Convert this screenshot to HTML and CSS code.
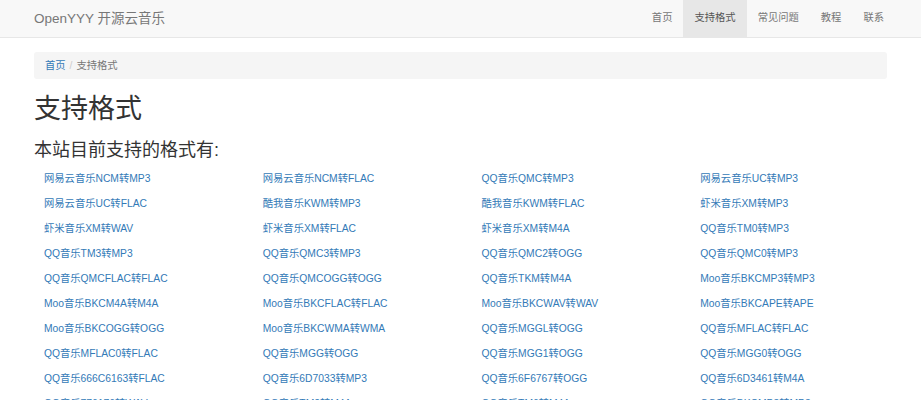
FILE: index.html
```html
<!DOCTYPE html>
<html lang="zh-CN">
<head>
  <meta charset="UTF-8" />
  <meta name="viewport" content="width=device-width, initial-scale=1.0" />
  <title>支持格式 - OpenYYY 开源云音乐</title>
  <link rel="stylesheet" href="styles.css">
</head>
<body>

  <nav class="navbar">
    <div class="container navbar-inner">
      <a class="brand" href="#">OpenYYY 开源云音乐</a>
      <ul class="nav">
        <li><a href="#">首页</a></li>
        <li class="active"><a href="#">支持格式</a></li>
        <li><a href="#">常见问题</a></li>
        <li><a href="#">教程</a></li>
        <li><a href="#">联系</a></li>
      </ul>
    </div>
  </nav>

  <div class="container">
    <ol class="breadcrumb">
      <li><a href="#">首页</a></li>
      <li class="current">支持格式</li>
    </ol>

    <h1>支持格式</h1>
    <h3>本站目前支持的格式有:</h3>

    <ul class="formats">
      <li><a href="#">网易云音乐NCM转MP3</a></li>
      <li><a href="#">网易云音乐NCM转FLAC</a></li>
      <li><a href="#">QQ音乐QMC转MP3</a></li>
      <li><a href="#">网易云音乐UC转MP3</a></li>

      <li><a href="#">网易云音乐UC转FLAC</a></li>
      <li><a href="#">酷我音乐KWM转MP3</a></li>
      <li><a href="#">酷我音乐KWM转FLAC</a></li>
      <li><a href="#">虾米音乐XM转MP3</a></li>

      <li><a href="#">虾米音乐XM转WAV</a></li>
      <li><a href="#">虾米音乐XM转FLAC</a></li>
      <li><a href="#">虾米音乐XM转M4A</a></li>
      <li><a href="#">QQ音乐TM0转MP3</a></li>

      <li><a href="#">QQ音乐TM3转MP3</a></li>
      <li><a href="#">QQ音乐QMC3转MP3</a></li>
      <li><a href="#">QQ音乐QMC2转OGG</a></li>
      <li><a href="#">QQ音乐QMC0转MP3</a></li>

      <li><a href="#">QQ音乐QMCFLAC转FLAC</a></li>
      <li><a href="#">QQ音乐QMCOGG转OGG</a></li>
      <li><a href="#">QQ音乐TKM转M4A</a></li>
      <li><a href="#">Moo音乐BKCMP3转MP3</a></li>

      <li><a href="#">Moo音乐BKCM4A转M4A</a></li>
      <li><a href="#">Moo音乐BKCFLAC转FLAC</a></li>
      <li><a href="#">Moo音乐BKCWAV转WAV</a></li>
      <li><a href="#">Moo音乐BKCAPE转APE</a></li>

      <li><a href="#">Moo音乐BKCOGG转OGG</a></li>
      <li><a href="#">Moo音乐BKCWMA转WMA</a></li>
      <li><a href="#">QQ音乐MGGL转OGG</a></li>
      <li><a href="#">QQ音乐MFLAC转FLAC</a></li>

      <li><a href="#">QQ音乐MFLAC0转FLAC</a></li>
      <li><a href="#">QQ音乐MGG转OGG</a></li>
      <li><a href="#">QQ音乐MGG1转OGG</a></li>
      <li><a href="#">QQ音乐MGG0转OGG</a></li>

      <li><a href="#">QQ音乐666C6163转FLAC</a></li>
      <li><a href="#">QQ音乐6D7033转MP3</a></li>
      <li><a href="#">QQ音乐6F6767转OGG</a></li>
      <li><a href="#">QQ音乐6D3461转M4A</a></li>

      <li><a href="#">QQ音乐776176转WAV</a></li>
      <li><a href="#">QQ音乐TM2转M4A</a></li>
      <li><a href="#">QQ音乐TM6转M4A</a></li>
      <li><a href="#">QQ音乐BKCMP3转MP3</a></li>
    </ul>
  </div>

</body>
</html>
```

FILE: styles.css
```css
* {
  box-sizing: border-box;
}

body {
  margin: 0;
  font-family: "Liberation Sans", Arial, "Noto Sans CJK SC", sans-serif;
  font-size: 10.3px;
  line-height: 1.43;
  color: #333;
  background: #fff;
}

a {
  color: #337ab7;
  text-decoration: none;
}

.container {
  padding: 0 34px;
}

/* top bar */
.navbar {
  height: 38px;
  background: #f8f8f8;
  border-bottom: 1px solid #e7e7e7;
}

.navbar-inner {
  display: flex;
  justify-content: space-between;
  align-items: stretch;
  height: 37px;
}

.brand {
  display: flex;
  align-items: center;
  font-size: 13.5px;
  color: #777;
}

.nav {
  display: flex;
  list-style: none;
  margin: 0 -8px 0 0;
  padding: 0;
}

.nav li a {
  display: flex;
  align-items: center;
  height: 100%;
  padding: 0 11px;
  color: #777;
}

.nav li.active a {
  background: #e7e7e7;
  color: #555;
}

/* breadcrumb */
.breadcrumb {
  display: flex;
  list-style: none;
  margin: 14px 0 14px;
  padding: 6px 11px;
  line-height: 15px;
  background: #f5f5f5;
  border-radius: 3px;
}

.breadcrumb li + li::before {
  content: "/";
  padding: 0 4px;
  color: #ccc;
}

.breadcrumb .current {
  color: #777;
}

h1 {
  font-size: 27px;
  font-weight: 400;
  line-height: 1.1;
  margin: 16px 0 7px;
}

h3 {
  font-size: 18px;
  font-weight: 400;
  line-height: 1.1;
  margin: 16px 0 6px;
}

/* formats list */
.formats {
  display: grid;
  grid-template-columns: repeat(4, 1fr);
  list-style: none;
  margin: 0 -11px;
  padding: 0;
}

.formats li {
  height: 25px;
  padding: 0 11px 0 21px;
  display: flex;
  align-items: center;
}
```
